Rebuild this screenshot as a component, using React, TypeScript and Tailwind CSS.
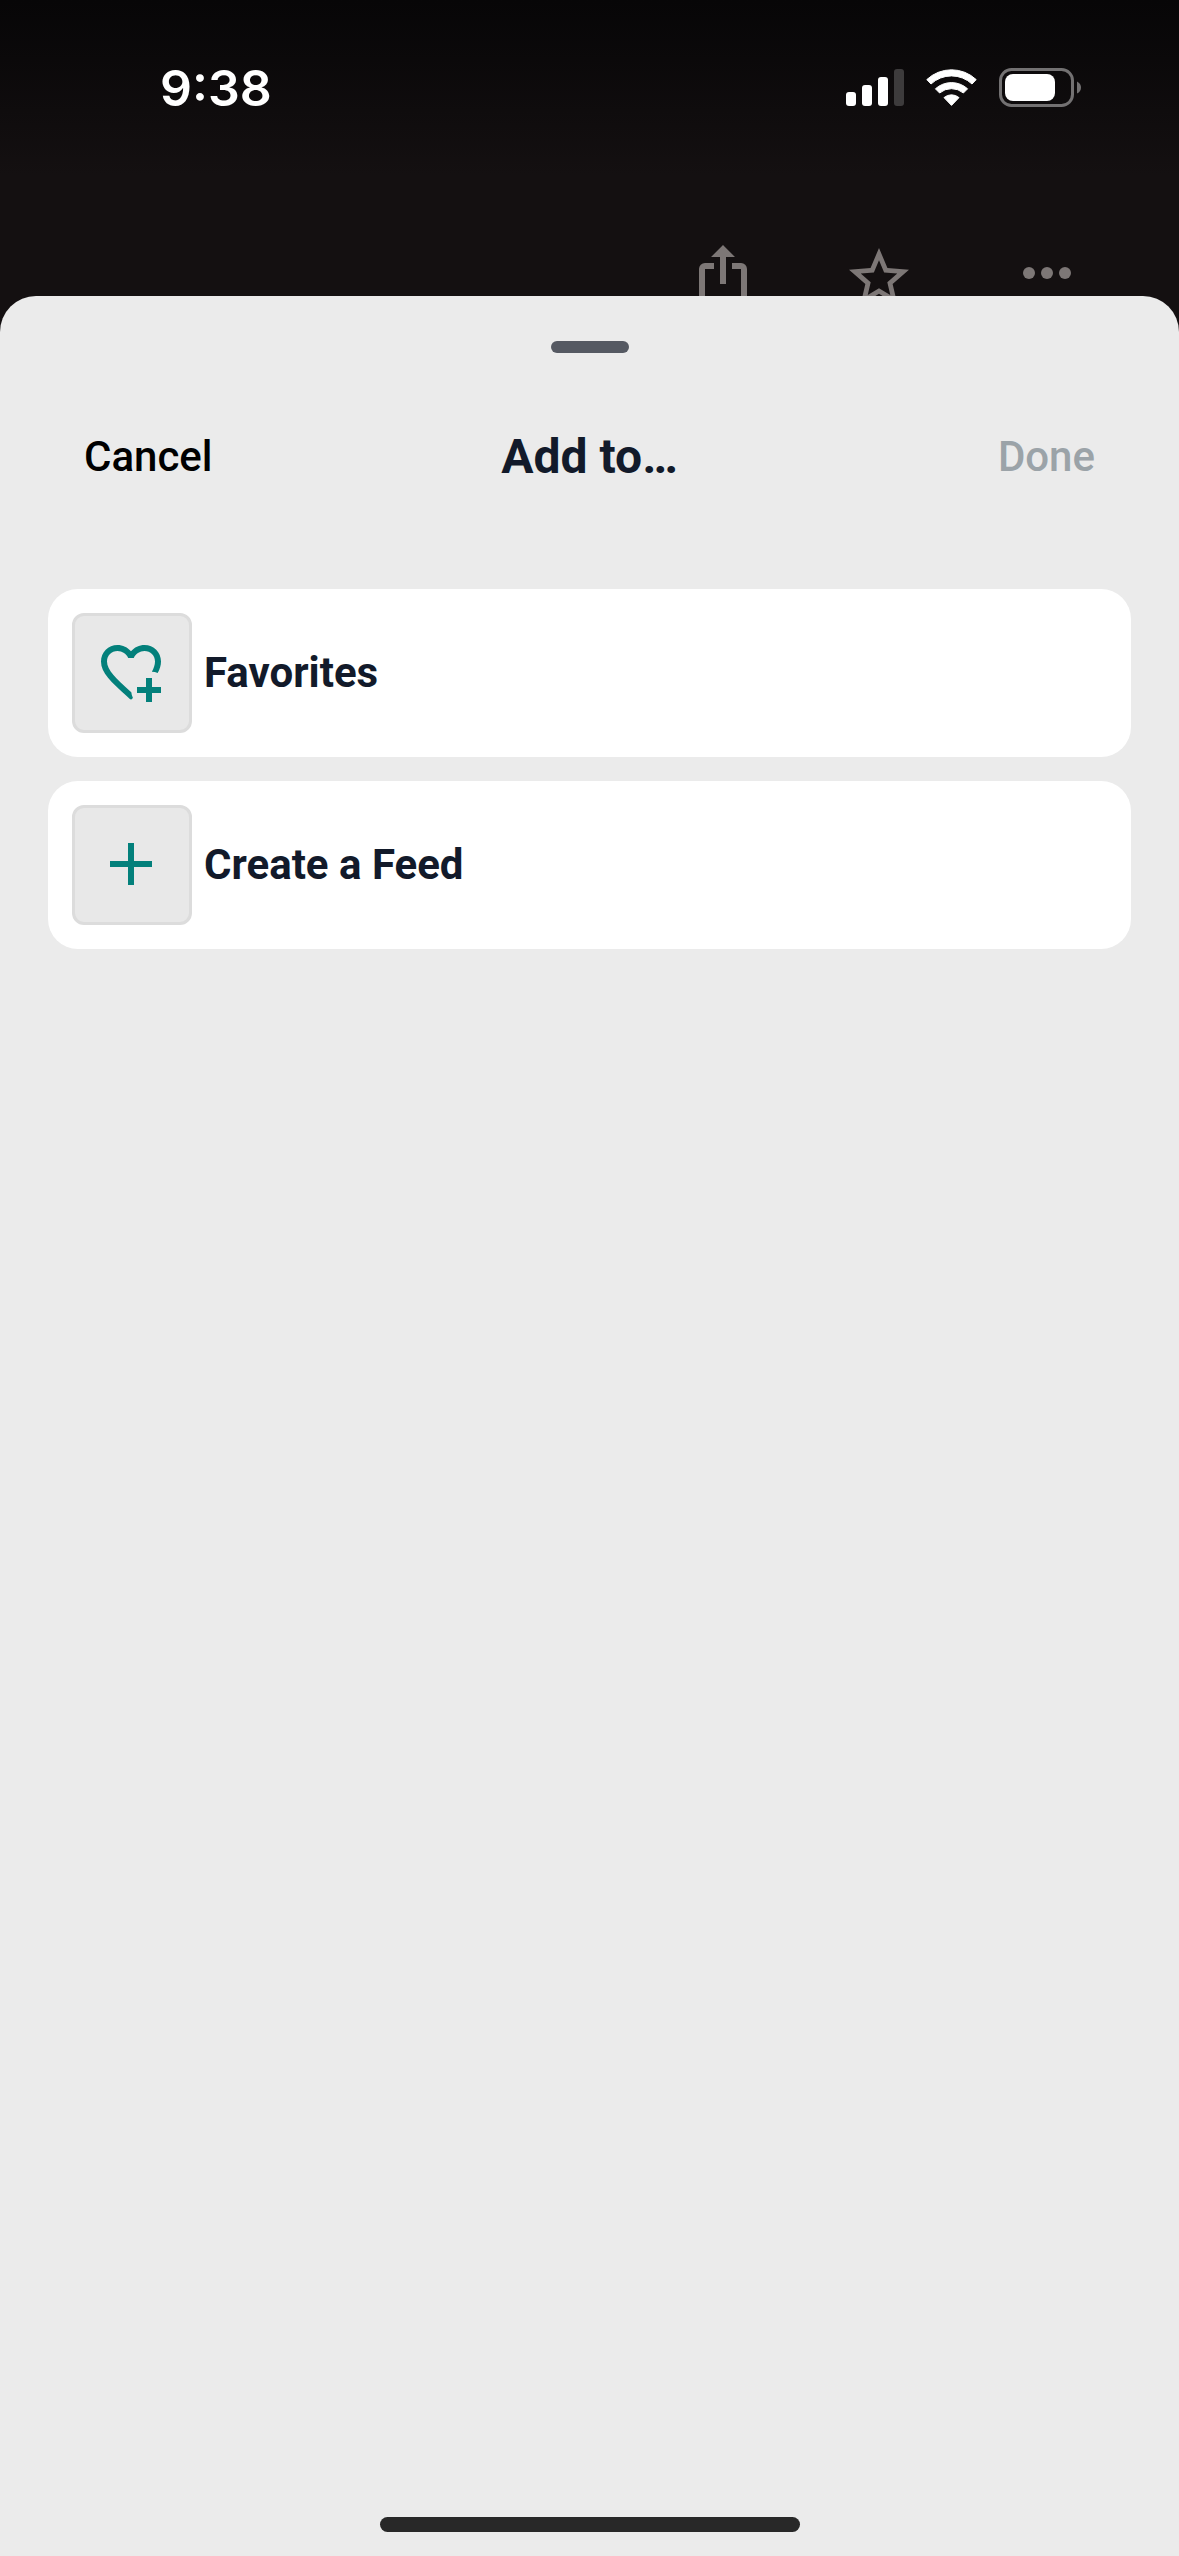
import React from "react";

const HeartPlusIcon = () => (
  <svg viewBox="0 0 24 24" className="size-[72px]" fill="#03807b">
    <path d="M11.7 21.1L10.55 20.03C5.4 15.36 2 12.27 2 8.5C2 5.41 4.42 3 7.5 3C9.24 3 10.91 3.81 12 5.08C13.09 3.81 14.76 3 16.5 3C19.58 3 22 5.41 22 8.5C22 9.8 21.6 11.1 20.9 12.3Q20 11.95 18.95 11.9C19.6 10.75 20 9.65 20 8.5C20 6.5 18.5 5 16.5 5C14.96 5 13.46 6 12.93 7.36H11.07C10.54 6 9.04 5 7.5 5C5.5 5 4 6.5 4 8.5C4 11.39 7.14 14.24 11.9 18.55L12.1 18.75Q12.2 19.8 12.65 20.7L12.1 21.2Z" />
    <path d="M17 14H19V17H22V19H19V22H17V19H14V17H17Z" />
  </svg>
);

const PlusIcon = () => (
  <svg viewBox="0 0 24 24" className="size-[72px]" fill="#03807b">
    <path d="M19 13H13V19H11V13H5V11H11V5H13V11H19V13Z" />
  </svg>
);

const items = [
  { label: "Favorites", icon: <HeartPlusIcon /> },
  { label: "Create a Feed", icon: <PlusIcon /> },
];

const StatusBar = () => (
  <div className="flex h-[176px] items-center justify-between bg-linear-to-b from-[#070607] to-[#141011] pl-40 pr-[97px]">
    <span className="font-[Inter,sans-serif] text-[50px] leading-[60px] font-semibold text-white">9:38</span>
    <div className="flex items-center gap-[22px]">
      <svg viewBox="0 0 58 40" className="h-10 w-[58px]" fill="#fff">
        <rect x="0" y="24" width="10" height="14" rx="3" />
        <rect x="16" y="17" width="10" height="21" rx="3" />
        <rect x="32" y="9" width="10" height="29" rx="3" />
        <rect x="48" y="1" width="10" height="37" rx="3" fill="#3d3b3c" />
      </svg>
      <svg viewBox="0 0 51 40" className="h-10 w-[51px]" fill="#fff" stroke="#fff" strokeLinejoin="round">
        <path d="M.8 11.6A36 36 0 0 1 50.2 11.6L46 16A30 30 0 0 0 5 16Z" />
        <path d="M9.4 20.8A24 24 0 0 1 41.6 20.8L37.4 25A18.5 18.5 0 0 0 13.6 25Z" />
        <path d="M18 29.6A11.5 11.5 0 0 1 33 29.6L25.5 37.4Z" />
      </svg>
      <svg viewBox="0 0 83 40" className="h-10 w-[83px]" fill="none">
        <rect x="1.5" y="1.5" width="72" height="36" rx="11" stroke="#737172" strokeWidth="3" />
        <rect x="6" y="6" width="50" height="27" rx="8" fill="#fff" />
        <path d="M78 13.5Q82 15.5 82 19.5Q82 23.5 78 25.5Z" fill="#737172" />
      </svg>
    </div>
  </div>
);

// the sheet covers the lower part of these buttons
const Toolbar = () => (
  <div className="flex h-[120px] items-start justify-end overflow-hidden pt-[66px] pr-24 text-[#7d7776]">
    <button aria-label="Share" className="mr-[84px]">
      <svg viewBox="0 0 24 24" className="size-[72px]" fill="currentColor">
        <path d="M12,1L8,5H11V14H13V5H16M18,23H6C4.89,23 4,22.1 4,21V9A2,2 0 0,1 6,7H9V9H6V21H18V9H15V7H18A2,2 0 0,1 20,9V21A2,2 0 0,1 18,23Z" />
      </svg>
    </button>
    <button aria-label="Star" className="mr-24">
      <svg viewBox="0 0 24 24" className="size-[72px]" fill="currentColor">
        <path d="M12,15.39L8.24,17.66L9.23,13.38L5.91,10.5L10.29,10.13L12,6.09L13.71,10.13L18.09,10.5L14.77,13.38L15.76,17.66M22,9.24L14.81,8.63L12,2L9.19,8.63L2,9.24L7.45,13.97L5.82,21L12,17.27L18.18,21L16.54,13.97L22,9.24Z" />
      </svg>
    </button>
    <button aria-label="More">
      <svg viewBox="0 0 24 24" className="size-[72px]" fill="currentColor">
        <circle cx="6" cy="10.33" r="2" />
        <circle cx="12" cy="10.33" r="2" />
        <circle cx="18" cy="10.33" r="2" />
      </svg>
    </button>
  </div>
);

export default function App() {
  return (
    <div className="flex min-h-screen flex-col bg-[#141011] font-[Roboto,sans-serif]">
      <StatusBar />
      <Toolbar />
      <div className="flex grow flex-col rounded-t-[36px] bg-[#ebebeb] pt-[45px] pb-6">
        <div className="h-3 w-[78px] self-center rounded-full bg-[#555962]" />
        <div className="grid grid-cols-3 items-center px-[84px] pt-[72px] text-[42px] leading-[64px] font-medium">
          <button className="justify-self-start text-black">Cancel</button>
          <h1 className="text-center text-5xl leading-[64px] font-bold text-[#121a2a]">Add to…</h1>
          <button disabled className="justify-self-end text-[#9ba3a8]">Done</button>
        </div>
        <ul className="flex flex-col gap-6 px-12 pt-[100px]">
          {items.map((item) => (
            <li key={item.label}>
              <button className="flex w-full items-center gap-3 rounded-[30px] bg-white p-6">
                <span className="flex size-[120px] items-center justify-center rounded-xl border-3 border-[#dcdcdc] bg-[#e8e8e8] pr-0.5 pb-0.5">
                  {item.icon}
                </span>
                <span className="text-[42px] leading-[48px] font-bold text-[#121a2a]">{item.label}</span>
              </button>
            </li>
          ))}
        </ul>
        <div className="mt-auto h-[15px] w-[420px] self-center rounded-full bg-[#282828]" />
      </div>
    </div>
  );
}
